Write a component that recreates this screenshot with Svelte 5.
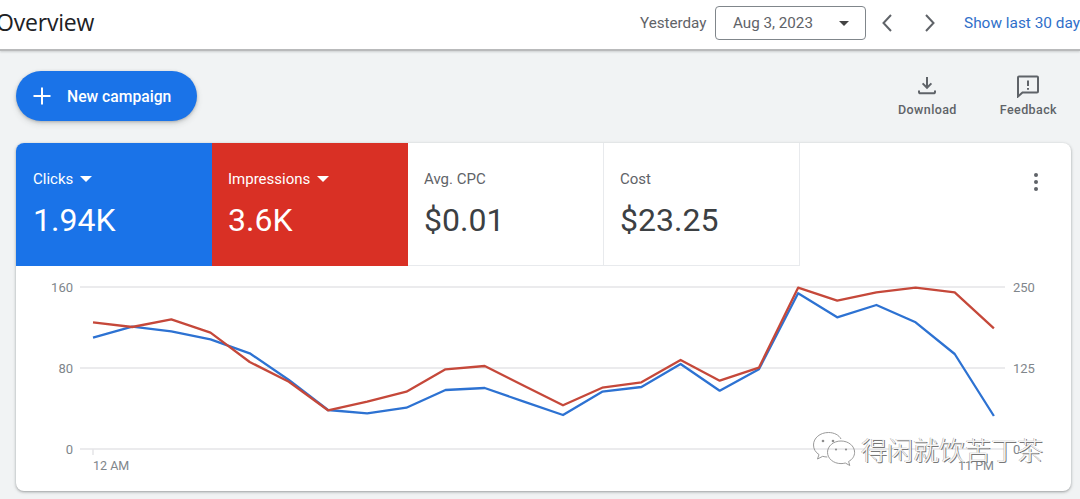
<script lang="ts">
  const xs = Array.from({ length: 24 }, (_, i) => 93 + i * 39.17)

  const red = [322.3, 327, 319.3, 332.7, 362, 381.7, 410.3, 401.7, 391.7, 369.3, 366, 385.7, 405.3, 387.7, 382.3, 360, 380.7, 367.7, 287.7, 300.7, 292.3, 287.7, 292.3, 328.3]
  const blue = [337.7, 326.7, 331.3, 339.3, 353.3, 380, 410, 413.3, 407.7, 390, 388, 401.7, 415, 391.7, 387, 364, 390.7, 369.3, 293.3, 317.3, 305, 322.3, 354, 416]

  const toPoints = (ys: number[]) => ys.map((y, i) => `${xs[i].toFixed(1)},${y}`).join(" ")

  const tiles = [
    { label: "Clicks", value: "1.94K", kind: "blue", menu: true },
    { label: "Impressions", value: "3.6K", kind: "red", menu: true },
    { label: "Avg. CPC", value: "$0.01", kind: "plain", menu: false },
    { label: "Cost", value: "$23.25", kind: "plain", menu: false },
  ]

  const grid = [
    { y: 287, left: "160", right: "250" },
    { y: 368, left: "80", right: "125" },
    { y: 449, left: "0", right: "0" },
  ]
</script>

<div class="page">
  <header class="topbar">
    <h1>Overview</h1>
    <div class="dates">
      <span class="preset">Yesterday</span>
      <div class="picker">
        <span>Aug 3, 2023</span>
        <i class="caret dark"></i>
      </div>
      <svg class="chevron" viewBox="0 0 12 20" aria-hidden="true"><path d="M10 2 2.5 10l7.5 8" /></svg>
      <svg class="chevron next" viewBox="0 0 12 20" aria-hidden="true"><path d="M2 2l7.5 8L2 18" /></svg>
      <span class="link">Show last 30 days</span>
    </div>
  </header>

  <div class="actions">
    <button class="fab">
      <svg viewBox="0 0 18 18" aria-hidden="true"><path d="M9 0.5v17M0.5 9h17" /></svg>
      New campaign
    </button>
    <div class="tools">
      <div class="tool download">
        <svg viewBox="0 0 20 20" aria-hidden="true">
          <path d="M10 1v10M5.6 7.4 10 11.8l4.4-4.4" />
          <path class="tray" d="M2 14.5v1.2c0 .9.7 1.6 1.6 1.6h12.8c.9 0 1.6-.7 1.6-1.6v-1.2" />
        </svg>
        <span>Download</span>
      </div>
      <div class="tool feedback">
        <svg viewBox="0 0 24 24" aria-hidden="true">
          <path d="M3 2.5h18c.6 0 1 .4 1 1v14c0 .6-.4 1-1 1H6.5L2 22.5v-19c0-.6.4-1 1-1z" />
          <path d="M12 6.5v5.5M12 14v1.8" />
        </svg>
        <span>Feedback</span>
      </div>
    </div>
  </div>

  <section class="card">
    <div class="tiles">
      {#each tiles as tile}
        <div class="tile {tile.kind}">
          <div class="label">
            {tile.label}
            {#if tile.menu}<i class="caret"></i>{/if}
          </div>
          <div class="value">{tile.value}</div>
        </div>
      {/each}
      <div class="more">
        <i></i><i></i><i></i>
      </div>
    </div>

    <svg class="chart" viewBox="16 266 1055 225" aria-label="Clicks and impressions by hour">
      {#each grid as row}
        <line class="gridline" x1="80" x2="1005" y1={row.y} y2={row.y} />
        <text class="axis" x="73" y={row.y + 4.5} text-anchor="end">{row.left}</text>
        <text class="axis" x="1013" y={row.y + 4.5}>{row.right}</text>
      {/each}
      <line class="gridline" x1="93" x2="93" y1="449" y2="455" />
      <text class="axis tick" x="93" y="470">12 AM</text>
      <text class="axis tick" x="994" y="470" text-anchor="end">11 PM</text>
      <polyline class="series s-blue" points={toPoints(blue)} />
      <polyline class="series s-red" points={toPoints(red)} />
    </svg>
  </section>

  <div class="watermark">
    <svg viewBox="0 0 44 38" aria-hidden="true">
      <path d="M29 8C27 4 22 1.500 16.500 1.500 8 1.500 1.500 7 1.500 14c0 4 2 7.300 5.500 9.600L5.500 28l5.200-2.700c1.400.4 3 .7 4.600.7" />
      <path d="M29 10c-7.500 0-13.500 5-13.500 11.300S21.500 32.600 29 32.600c1.500 0 3-.2 4.300-.6l4.500 2.500-1.200-4c3.700-2 6-5.300 6-9.200C42.600 15 36.500 10 29 10z" />
      <circle cx="11" cy="10" r="1.300" />
      <circle cx="21" cy="10" r="1.300" />
      <circle cx="24" cy="18.500" r="1.100" />
      <circle cx="34" cy="18.500" r="1.100" />
    </svg>
    <span>得闲就饮苦丁茶</span>
  </div>
</div>

<style>
  :global(body) {
    margin: 0;
  }

  .page {
    position: relative;
    width: 1080px;
    height: 499px;
    overflow: hidden;
    background: #f1f3f4;
    font-family: Roboto, "Liberation Sans", sans-serif;
  }

  .topbar {
    display: flex;
    align-items: center;
    justify-content: space-between;
    height: 49px;
    background: #fff;
    border-bottom: 2px solid #b9babb;
    box-shadow: 0 1px 2px rgba(60, 64, 67, 0.2);
  }

  h1 {
    margin: 0 0 5px -4px;
    font-family: "Open Sans", Roboto, sans-serif;
    font-size: 23px;
    font-weight: 400;
    letter-spacing: -0.2px;
    color: #202124;
  }

  .dates {
    display: flex;
    align-items: center;
    flex: none;
    width: 440px;
    margin-bottom: 3px;
    white-space: nowrap;
    font-size: 15.2px;
    color: #5f6368;
  }

  .preset {
    flex: none;
    width: 75px;
  }

  .picker {
    display: flex;
    flex: none;
    align-items: center;
    justify-content: space-between;
    box-sizing: border-box;
    width: 151px;
    height: 34px;
    padding: 0 16px 0 17px;
    border: 1px solid #80868b;
    border-radius: 4px;
    color: #5f6368;
  }

  .caret {
    display: inline-block;
    width: 0;
    height: 0;
    border-left: 6px solid transparent;
    border-right: 6px solid transparent;
    border-top: 6px solid #fff;
  }

  .caret.dark {
    border-left-width: 5px;
    border-right-width: 5px;
    border-top: 5px solid #444;
  }

  .chevron {
    flex: none;
    width: 12px;
    height: 20px;
    margin-left: 15px;
    fill: none;
    stroke: #5f6368;
    stroke-width: 2;
  }

  .chevron.next {
    margin-left: 31px;
  }

  .link {
    flex: none;
    margin-left: 28px;
    font-size: 15.4px;
    color: #2f6fc9;
  }

  .actions {
    display: flex;
    align-items: flex-start;
    justify-content: space-between;
    height: 92px;
    padding: 20px 16px 0;
    box-sizing: border-box;
  }

  .fab {
    display: flex;
    align-items: center;
    gap: 16px;
    box-sizing: border-box;
    width: 181px;
    height: 50px;
    padding: 0 0 0 17px;
    border: 0;
    border-radius: 25px;
    background: #1a73e8;
    box-shadow: 0 1px 3px rgba(60, 64, 67, 0.3), 0 3px 6px rgba(60, 64, 67, 0.15);
    color: #fff;
    font-family: inherit;
    font-size: 15.7px;
    font-weight: 500;
  }

  .fab svg {
    flex: none;
    width: 18px;
    height: 18px;
    fill: none;
    stroke: #fff;
    stroke-width: 2;
  }

  .tools {
    display: flex;
    gap: 43px;
    margin: 5px 7px 0 0;
  }

  .tool {
    display: flex;
    flex-direction: column;
    align-items: center;
    gap: 6px;
    font-size: 12.5px;
    font-weight: 500;
    letter-spacing: 0.4px;
    color: #5f6368;
  }

  .tool svg {
    width: 20px;
    height: 20px;
    fill: none;
    stroke: #5f6368;
    stroke-width: 2;
  }

  .tool.feedback svg {
    width: 24px;
    height: 24px;
    margin: -2px 0;
  }

  .card {
    display: flex;
    flex-direction: column;
    width: 1055px;
    height: 348px;
    margin-left: 16px;
    border-radius: 8px;
    overflow: hidden;
    background: #fff;
    box-shadow: 0 1px 2px rgba(60, 64, 67, 0.3), 0 1px 3px 1px rgba(60, 64, 67, 0.15);
  }

  .tiles {
    position: relative;
    display: flex;
    flex: none;
    height: 123px;
  }

  .tile {
    box-sizing: border-box;
    width: 196px;
    padding: 27px 0 0 16px;
    color: #fff;
  }

  .tile.blue {
    padding-left: 17px;
    background: #1a73e8;
  }

  .tile.red {
    background: #d93025;
  }

  .tile.plain {
    border-right: 1px solid #e8eaed;
    border-bottom: 1px solid #e8eaed;
    color: #3c4043;
  }

  .label {
    display: flex;
    align-items: center;
    gap: 7px;
    height: 18px;
    font-size: 15px;
  }

  .tile.plain .label {
    color: #5f6368;
  }

  .value {
    margin-top: 13px;
    font-size: 32px;
    line-height: 38px;
  }

  .more {
    position: absolute;
    top: 30px;
    right: 33px;
    display: flex;
    flex-direction: column;
    gap: 3px;
  }

  .more i {
    width: 4px;
    height: 4px;
    border-radius: 50%;
    background: #5f6368;
  }

  .chart {
    display: block;
    width: 1055px;
    height: 225px;
  }

  .gridline {
    stroke: #e4e5e7;
    stroke-width: 1.5;
  }

  .axis {
    font-family: Roboto, sans-serif;
    font-size: 13px;
    fill: #80868b;
  }

  .tick {
    font-size: 12.5px;
  }

  .series {
    fill: none;
    stroke-width: 2.3;
    stroke-linejoin: round;
  }

  .s-blue {
    stroke: #2d72d2;
  }

  .s-red {
    stroke: #c5483a;
  }

  .watermark {
    position: absolute;
    left: 812px;
    top: 431px;
    display: flex;
    align-items: center;
    gap: 5px;
    pointer-events: none;
  }

  .watermark svg {
    flex: none;
    width: 44px;
    height: 38px;
    fill: none;
    stroke: #8e8e8e;
    stroke-width: 0.9;
  }

  .watermark circle {
    fill: #8e8e8e;
    stroke: none;
  }

  .watermark span {
    margin-top: -3px;
    font-family: "Noto Sans CJK SC", sans-serif;
    font-size: 26px;
    font-weight: 300;
    line-height: 34px;
    white-space: nowrap;
    color: rgba(255, 255, 255, 0.92);
    text-shadow: 1px 1px 0 #777, -0.5px -0.5px 0 #aaa;
  }
</style>
